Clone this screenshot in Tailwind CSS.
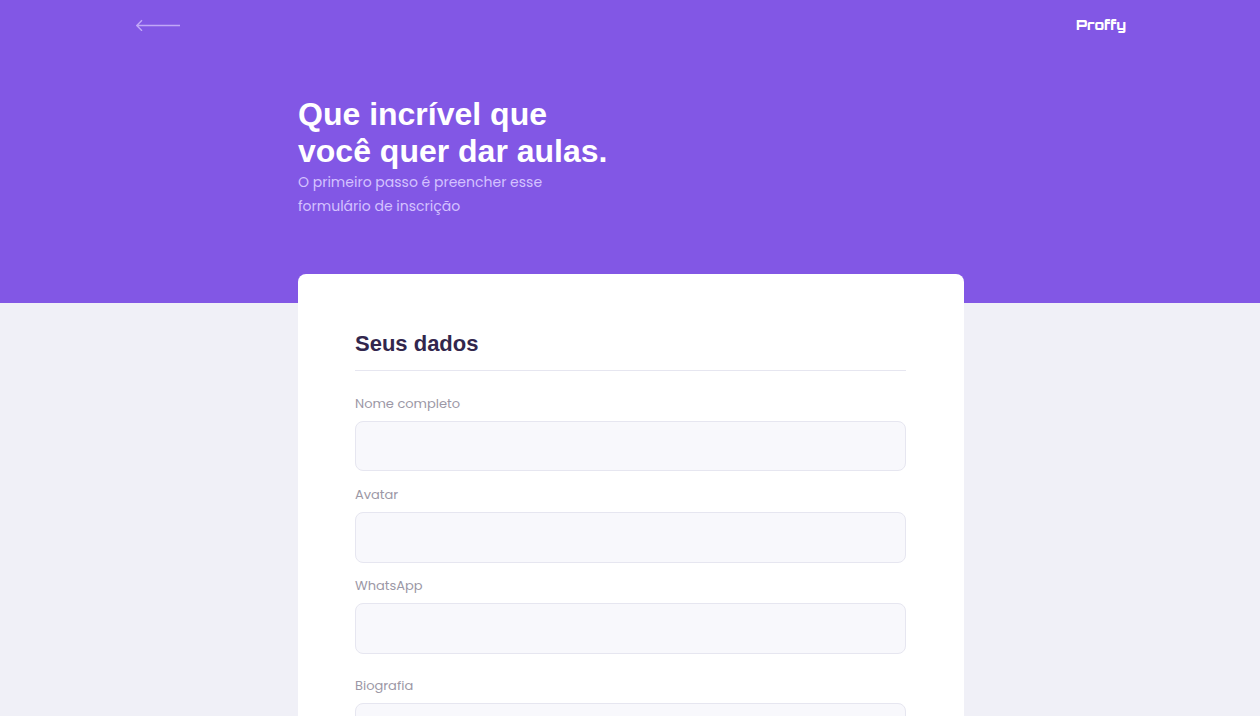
<!DOCTYPE html>
<html lang="pt-BR">
<head>
<meta charset="utf-8">
<meta name="viewport" content="width=device-width, initial-scale=1">
<title>Proffy</title>
<script src="https://cdn.jsdelivr.net/npm/@tailwindcss/browser@4"></script>
</head>
<body class="min-h-screen bg-[#f0f0f7] font-['Poppins','Inter',sans-serif]">
<header class="bg-[#8257e5] pl-0.5 pb-[85px]">
  <div class="mx-auto flex h-[50px] max-w-[990px] items-center justify-between">
    <a href="#" aria-label="Voltar" class="text-[#c1a8f7]">
      <svg class="block h-3 w-11" viewBox="0 0 44 12" fill="none" stroke="currentColor" stroke-width="1.4"><path d="M44 6.5H1M6 1.2L.8 6.5L6 11.8"/></svg>
    </a>
    <span class="font-['Orbitron','Inter',sans-serif] text-[14px] leading-5 font-black text-white">Proffy</span>
  </div>
  <div class="mx-auto mt-[46px] max-w-[666px]">
    <h1 class="font-['Liberation_Sans',sans-serif] text-[32px] leading-[37px] font-bold text-white">Que incrível que<br>você quer dar aulas.</h1>
    <p class="text-[14px] leading-6 text-[#d4c2ff]">O primeiro passo é preencher esse<br>formulário de inscrição</p>
  </div>
</header>
<main class="pl-0.5">
  <form class="mx-auto -mt-[29px] max-w-[666px] rounded-t-lg bg-white pt-[57px] pr-[58px] pb-14 pl-[57px]">
    <h2 class="border-b border-[#e6e6f0] pb-[14px] font-['Liberation_Sans',sans-serif] text-[22px] leading-[25px] font-bold text-[#32264d]">Seus dados</h2>
    <div class="mt-[22px] text-[13px] leading-[22px] text-[#9c98a6]">
      <label for="name" class="block">Nome completo</label>
      <input id="name" type="text" class="mt-[6px] block h-[50px] w-full rounded-lg border border-[#e6e6f0] bg-[#f8f8fc] px-4">
      <label for="avatar" class="mt-[13px] block">Avatar</label>
      <input id="avatar" type="text" class="mt-[6px] block h-[51px] w-full rounded-lg border border-[#e6e6f0] bg-[#f8f8fc] px-4">
      <label for="whatsapp" class="mt-3 block">WhatsApp</label>
      <input id="whatsapp" type="text" class="mt-[6px] block h-[51px] w-full rounded-lg border border-[#e6e6f0] bg-[#f8f8fc] px-4">
      <label for="bio" class="mt-[21px] block">Biografia</label>
      <textarea id="bio" class="mt-[6px] block h-36 w-full resize-none rounded-lg border border-[#e6e6f0] bg-[#f8f8fc] p-4"></textarea>
    </div>
  </form>
</main>
</body>
</html>
